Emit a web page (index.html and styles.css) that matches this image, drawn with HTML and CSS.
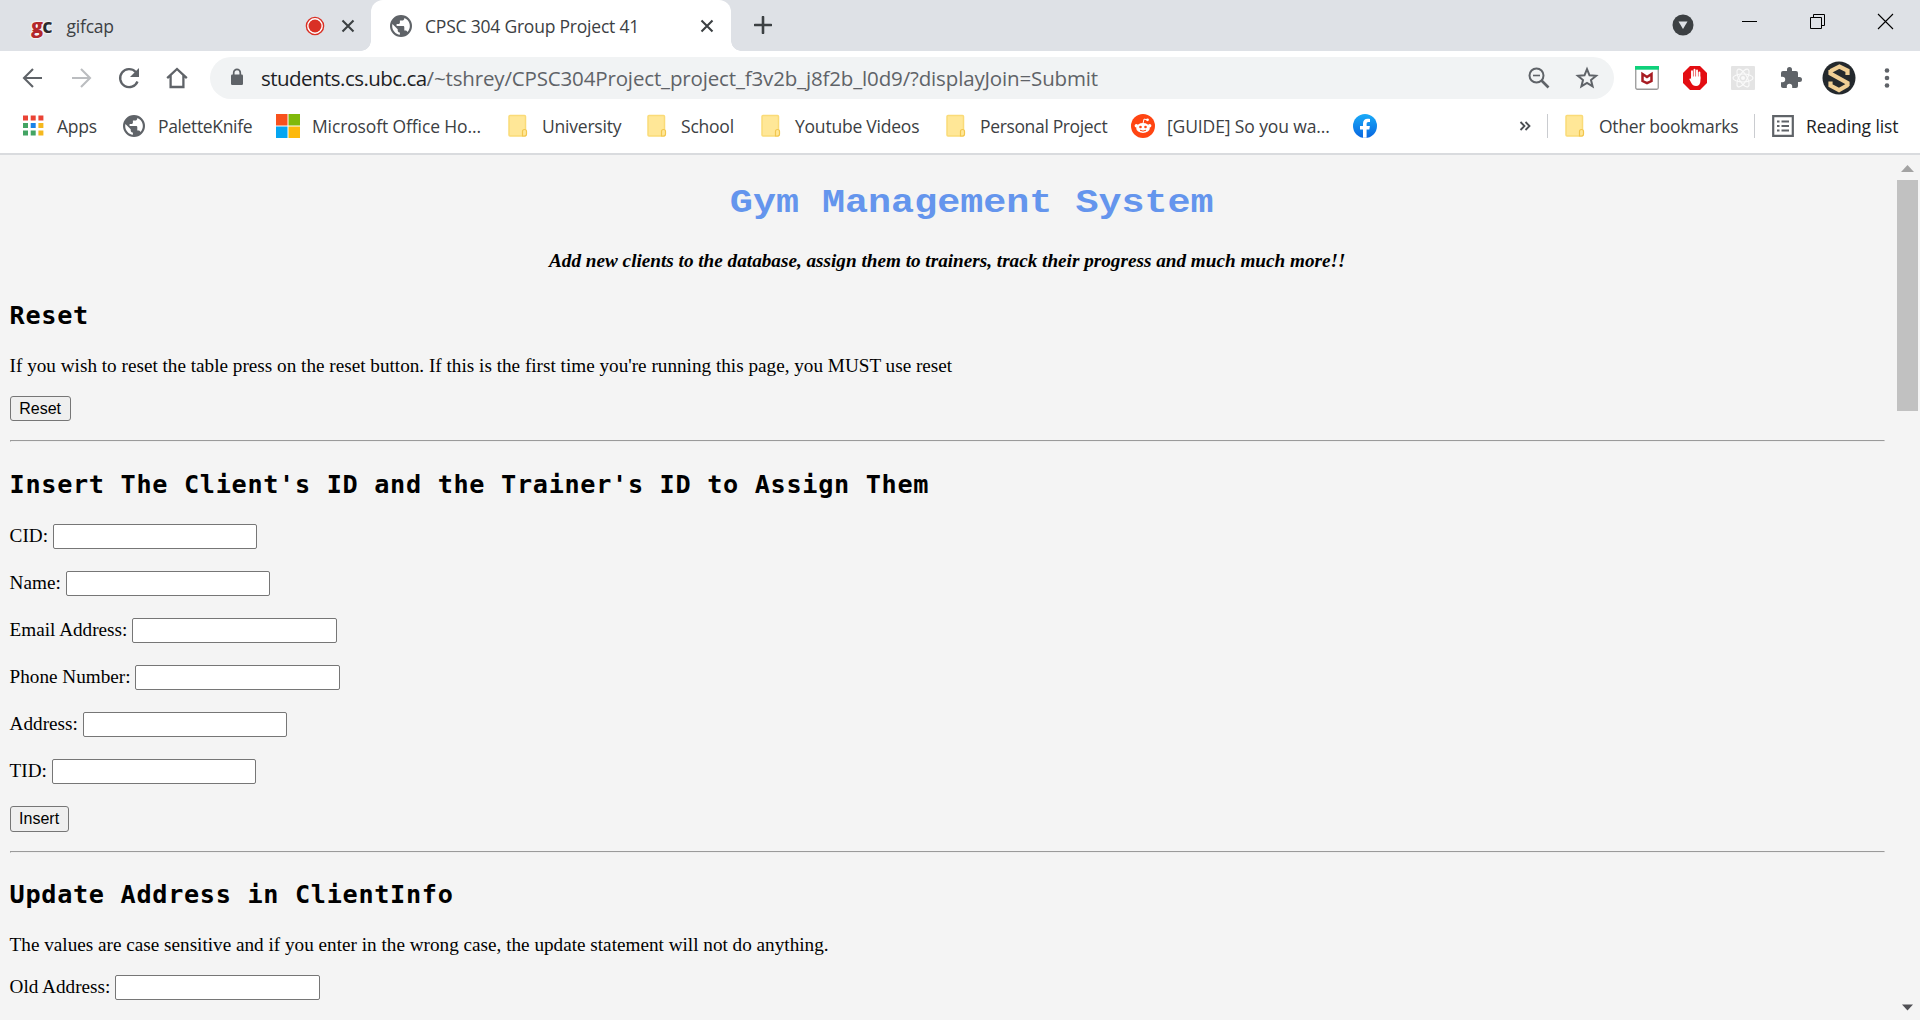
FILE: index.html
```html
<!DOCTYPE html>
<html lang="en">
<head>
<meta charset="utf-8">
<title>CPSC 304 Group Project 41</title>
<link rel="stylesheet" href="styles.css">
</head>
<body>
<svg class="defs" width="0" height="0">
  <symbol id="globe" viewBox="0 0 24 24"><path fill="#5f6368" d="M12 1a11 11 0 1 0 0 22 11 11 0 0 0 0-22zM10.900 20.800C6.500 20.200 3.200 16.500 3.200 12c0-.7.1-1.300.2-2l5.300 5.300v1.100c0 1.200 1 2.200 2.200 2.200v2.200zm7.600-2.800c-.3-.9-1.100-1.500-2.100-1.500h-1.100v-3.300c0-.6-.5-1.100-1.100-1.100H7.600V9.900h2.200c.6 0 1.100-.5 1.100-1.100V6.600h2.200c1.200 0 2.200-1 2.200-2.200v-.5A8.800 8.800 0 0 1 18.500 18z"/></symbol>
  <symbol id="folder" viewBox="0 0 20 24"><rect x="1" y="1.500" width="16.500" height="20.500" rx="1" fill="#ffe797" stroke="#fadb78" stroke-width="1.500"/><path d="M14.500 22v-4.500a2 2 0 0 1 4 0V20a2 2 0 0 1-2 2z" fill="#ffe797" stroke="#f2c64e" stroke-width="1.200"/></symbol>
  <symbol id="cross" viewBox="0 0 14 14"><path d="M1.500 1.500l11 11M12.500 1.500l-11 11" stroke="#3c4043" stroke-width="2.100" fill="none"/></symbol>
</svg>

<header class="tabstrip">
  <div class="tab">
    <span class="gc"><b>g</b><i>c</i></span>
    <span class="tab-title t-gif">gifcap</span>
    <svg class="rec" width="20" height="20" viewBox="0 0 20 20"><circle cx="10" cy="10" r="8.600" fill="#fff" stroke="#d93025" stroke-width="1.400"/><circle cx="10" cy="10" r="6.500" fill="#d93025"/></svg>
    <svg class="x" width="14" height="14"><use href="#cross"/></svg>
  </div>
  <div class="tab active">
    <svg width="24" height="24"><use href="#globe"/></svg>
    <span class="tab-title t-cpsc">CPSC 304 Group Project 41</span>
    <svg class="x" width="14" height="14"><use href="#cross"/></svg>
  </div>
  <svg class="plus" width="18" height="18" viewBox="0 0 18 18"><path d="M9 1v16M1 9h16" stroke="#3c4043" stroke-width="2.600" stroke-linecap="round"/></svg>
  <div class="window-controls">
    <svg class="down" width="22" height="22" viewBox="0 0 22 22"><circle cx="11" cy="11" r="10.500" fill="#3c4043"/><path d="M6.500 7.500h9L11 15z" fill="#dee1e6"/></svg>
    <svg class="wc" width="17" height="17" viewBox="0 0 17 17"><path d="M1 8.500h15" stroke="#000"/></svg>
    <svg class="wc" width="17" height="17" viewBox="0 0 17 17"><path d="M1.500 4.500h11v11h-11zM4.500 4.500v-3h11v11h-3" fill="none" stroke="#000"/></svg>
    <svg class="wc" width="17" height="17" viewBox="0 0 17 17"><path d="M1 1l15 15M16 1L1 16" stroke="#000" stroke-width="1.100"/></svg>
  </div>
</header>

<nav class="toolbar">
  <span class="tool"><svg width="24" height="24" viewBox="0 0 24 24"><path d="M21 12H4M12 3l-9 9 9 9" fill="none" stroke="#5f6368" stroke-width="2.100"/></svg></span>
  <span class="tool"><svg width="24" height="24" viewBox="0 0 24 24"><path d="M3 12h17M12 3l9 9-9 9" fill="none" stroke="#bbbdc0" stroke-width="2.100"/></svg></span>
  <span class="tool"><svg width="24" height="24" viewBox="0 0 24 24"><path d="M20.500 15.500A9 9 0 1 1 18.700 6" fill="none" stroke="#5f6368" stroke-width="2.300"/><path d="M22 2v9h-9z" fill="#5f6368"/></svg></span>
  <span class="tool"><svg width="24" height="24" viewBox="0 0 24 24"><path d="M2.200 12.200L12 3l9.800 9.200M5.600 9.500V21h12.800V9.500" fill="none" stroke="#5f6368" stroke-width="2.300"/></svg></span>
  <div class="omnibox">
    <svg class="lock" width="14" height="18" viewBox="0 0 14 18"><rect x="1" y="6.500" width="12" height="10.500" rx="1.200" fill="#5f6368"/><path d="M3.700 7V4.700a3.300 3.300 0 0 1 6.600 0V7" fill="none" stroke="#5f6368" stroke-width="1.700"/></svg>
    <span class="url"><span class="host">students.cs.ubc.ca</span><span class="path">/~tshrey/CPSC304Project_project_f3v2b_j8f2b_l0d9/?displayJoin=Submit</span></span>
    <span class="tool"><svg width="24" height="24" viewBox="0 0 24 24"><circle cx="9.500" cy="9.500" r="7" fill="none" stroke="#5f6368" stroke-width="2"/><path d="M14.500 14.500l7 7" stroke="#5f6368" stroke-width="2.700"/><path d="M6 9.500h7" stroke="#5f6368" stroke-width="1.600"/></svg></span>
    <span class="tool"><svg width="24" height="24" viewBox="0 0 24 24"><path d="M12 3.200l2.500 6.100 6.600.5-5.100 4.200 1.600 6.400L12 16.900l-5.600 3.500L8 14 2.900 9.800l6.600-.5z" fill="none" stroke="#5f6368" stroke-width="2"/></svg></span>
  </div>
  <span class="tool"><svg width="24" height="24" viewBox="0 0 24 24"><rect x=".75" y=".75" width="22.500" height="22.500" rx="1.500" fill="#fff" stroke="#999" stroke-width="1.300"/><path d="M0 0h24v3.700H0z" fill="#0fd17b"/><path d="M7.500 8l4.500 3 4.500-3v7L12 17.200 7.500 15z" fill="none" stroke="#a81c22" stroke-width="2.500"/></svg></span>
  <span class="tool"><svg width="24" height="24" viewBox="0 0 24 24"><path d="M7 0h10l7 7v10l-7 7H7l-7-7V7z" fill="#e30d12"/><path d="M9 13V5.300M11.500 12V3.800M14 12V4.400M16.400 13V6.500" stroke="#fff" stroke-width="1.900" stroke-linecap="round"/><path d="M8 10.500h9.400V15c0 3-1.700 5-4.300 5-2.500 0-3.700-1-4.900-3.200l-2-3.700c.9-1 1.900-.6 2.800.8z" fill="#fff"/></svg></span>
  <span class="tool"><svg width="24" height="24" viewBox="0 0 24 24"><rect width="24" height="24" rx="1" fill="#e4e4e4"/><g fill="none" stroke="#fafafa" stroke-width="1.100"><ellipse cx="12" cy="12" rx="10" ry="4"/><ellipse cx="12" cy="12" rx="10" ry="4" transform="rotate(60 12 12)"/><ellipse cx="12" cy="12" rx="10" ry="4" transform="rotate(120 12 12)"/></g><circle cx="12" cy="12" r="2" fill="#fafafa"/></svg></span>
  <span class="tool"><svg width="24" height="24" viewBox="0 0 24 24"><path d="M20.500 11H19V7a2 2 0 0 0-2-2h-4V3.500a2.500 2.500 0 0 0-5 0V5H4a2 2 0 0 0-2 2v3.800h1.500a2.700 2.700 0 0 1 0 5.400H2V20c0 1.100.9 2 2 2h3.800v-1.500a2.700 2.700 0 0 1 5.400 0V22H17a2 2 0 0 0 2-2v-4h1.500a2.500 2.500 0 0 0 0-5z" fill="#5f6368"/></svg></span>
  <span class="tool"><svg width="34" height="34" viewBox="0 0 34 34"><circle cx="17" cy="17" r="16.500" fill="#24292d"/><g fill="none" stroke="#f0cf95" stroke-width="4.200"><path d="M25.500 14V9.500L17.500 5.500 8.500 10.200"/><path d="M8.500 9v3.500l17 9.500v3"/><path d="M8.500 20.500v4l8.500 4.500 9-5"/></g></svg></span>
  <span class="tool"><svg width="24" height="24" viewBox="0 0 24 24"><g fill="#5f6368"><circle cx="12" cy="4.500" r="2.300"/><circle cx="12" cy="12" r="2.300"/><circle cx="12" cy="19.500" r="2.300"/></g></svg></span>
</nav>

<nav class="bookmarks">
  <a class="bm apps"><svg width="24" height="24" viewBox="0 0 24 24"><path d="M0 1.500h5v5H0zM7.700 1.500h5v5h-5zM15.400 1.500h5v5h-5z" fill="#ea4335"/><path d="M0 9h5v5H0zM0 16.500h5v5H0zM7.700 16.500h5v5h-5z" fill="#43a463"/><path d="M7.700 9h5v5h-5z" fill="#1a82e8"/><path d="M15.400 9h5v5h-5zM15.400 16.500h5v5h-5z" fill="#f5b81e"/></svg><span>Apps</span></a>
  <a class="bm tight"><svg class="nudge" width="24" height="24"><use href="#globe"/></svg><span>PaletteKnife</span></a>
  <a class="bm site"><svg width="24" height="24" viewBox="0 0 24 24"><path d="M0 0h11.500v11.500H0z" fill="#f8511d"/><path d="M12.500 0H24v11.500H12.500z" fill="#80b90b"/><path d="M0 12.500h11.500V24H0z" fill="#05a5f0"/><path d="M12.500 12.500H24V24H12.500z" fill="#fdb90c"/></svg><span>Microsoft Office Ho...</span></a>
  <a class="bm"><svg width="20" height="24"><use href="#folder"/></svg><span>University</span></a>
  <a class="bm"><svg width="20" height="24"><use href="#folder"/></svg><span>School</span></a>
  <a class="bm"><svg width="20" height="24"><use href="#folder"/></svg><span>Youtube Videos</span></a>
  <a class="bm tight"><svg width="20" height="24"><use href="#folder"/></svg><span>Personal Project</span></a>
  <a class="bm site"><svg width="24" height="24" viewBox="0 0 24 24"><circle cx="12" cy="12" r="12" fill="#ff4512"/><g fill="#fff"><ellipse cx="12" cy="14" rx="6.800" ry="5"/><circle cx="5.300" cy="11.800" r="1.700"/><circle cx="18.700" cy="11.800" r="1.700"/><circle cx="16.500" cy="5.800" r="1.400"/></g><path d="M12 9.500l1-4.400 3.300.7" fill="none" stroke="#fff"/><circle cx="9.500" cy="13" r="1.300" fill="#ff4512"/><circle cx="14.500" cy="13" r="1.300" fill="#ff4512"/><path d="M9 16.200q3 1.800 6 0" fill="none" stroke="#ff4512"/></svg><span>[GUIDE] So you wa...</span></a>
  <a class="bm"><svg width="24" height="24" viewBox="0 0 24 24"><defs><linearGradient id="fb" x2="0" y2="1"><stop stop-color="#1aabf8"/><stop offset="1" stop-color="#0866e0"/></linearGradient></defs><circle cx="12" cy="12" r="12" fill="url(#fb)"/><path d="M10 23.800v-8.300H7v-3.400h3V9.500c0-3 1.800-4.700 4.500-4.700 1.300 0 2.500.2 2.500.2v3h-1.500c-1.500 0-1.900.9-1.900 1.800v2.300h3.300l-.6 3.400h-2.700v8.300z" fill="#fff"/></svg></a>
  <svg class="more" width="12" height="12" viewBox="0 0 12 12"><path d="M1.500 2l4 4-4 4M6.500 2l4 4-4 4" fill="none" stroke="#4b4e52" stroke-width="1.800"/></svg>
  <a class="bm other"><svg width="20" height="24"><use href="#folder"/></svg><span>Other bookmarks</span></a>
  <a class="bm reading"><svg width="22" height="22" viewBox="0 0 22 22"><path d="M1.200 1.200h19.600v19.600H1.200z" fill="none" stroke="#5f6368" stroke-width="2.200"/><path d="M5 6.500h2.500M5 11h2.500M5 15.500h2.500M9.500 6.500H17M9.500 11H17M9.500 15.500H17" stroke="#5f6368" stroke-width="2"/></svg><span>Reading list</span></a>
</nav>

<div class="viewport">
  <main class="page">
    <h1><span>Gym Management System</span></h1>
    <p class="tagline">Add new clients to the database, assign them to trainers, track their progress and much much more!!</p>

    <h2>Reset</h2>
    <p>If you wish to reset the table press on the reset button. If this is the first time you're running this page, you MUST use reset</p>
    <button class="btn reset">Reset</button>
    <hr>

    <h2>Insert The Client's ID and the Trainer's ID to Assign Them</h2>
    <form class="fields">
      <label>CID: <input type="text"></label>
      <label>Name: <input type="text"></label>
      <label>Email Address: <input type="text"></label>
      <label>Phone Number: <input type="text"></label>
      <label>Address: <input type="text"></label>
      <label>TID: <input type="text"></label>
      <button class="btn insert" type="button">Insert</button>
    </form>
    <hr>

    <h2>Update Address in ClientInfo</h2>
    <p>The values are case sensitive and if you enter in the wrong case, the update statement will not do anything.</p>
    <form class="fields">
      <label>Old Address: <input type="text"></label>
    </form>
  </main>
  <div class="scrollbar">
    <svg width="13" height="7" viewBox="0 0 13 7"><path d="M6.500 0L13 7H0z" fill="#a3a3a3"/></svg>
    <div class="thumb"></div>
    <svg class="end" width="13" height="7" viewBox="0 0 13 7"><path d="M1 .5h11L6.500 6.500z" fill="#505055"/></svg>
  </div>
</div>
</body>
</html>
```

FILE: styles.css
```css
* { box-sizing: border-box; }

body {
  margin: 0;
  width: 1920px;
  height: 1020px;
  overflow: hidden;
  display: flex;
  flex-direction: column;
  background: #fff;
  font-family: "Open Sans", "Noto Sans", sans-serif;
  color: #3c4043;
}

.defs { position: absolute; }
svg { display: block; flex: none; }

/* Tab strip */
.tabstrip {
  display: flex;
  height: 51px;
  background: #dee1e6;
}

.tab {
  display: flex;
  align-items: center;
  width: 371px;
  padding: 0 16px 0 31px;
}

.tab.active {
  position: relative;
  width: 360px;
  padding: 0 17px 0 18px;
  background: #fff;
  border-radius: 12px 12px 0 0;
}

.tab.active::before,
.tab.active::after {
  content: "";
  position: absolute;
  bottom: 0;
  width: 10px;
  height: 10px;
}

.tab.active::before {
  left: -10px;
  background: radial-gradient(circle at 0 0, transparent 9.5px, #fff 10px);
}

.tab.active::after {
  right: -10px;
  background: radial-gradient(circle at 100% 0, transparent 9.5px, #fff 10px);
}

.tab-title {
  font-size: 17.5px;
  line-height: 24px;
  letter-spacing: -0.21px;
  white-space: nowrap;
}

.tab .x { margin-left: auto; }
.rec { margin-left: 191px; }

.gc {
  display: flex;
  width: 35.5px;
  font-size: 20px;
  font-weight: 700;
  line-height: 22px;
  letter-spacing: -1px;
  text-shadow: 0 0 2px #fff, 0 0 2px #fff, 0 0 2px #fff;
}
.gc b { color: #b3282b; }
.gc i { color: #2b2b2e; font-style: normal; }

.t-cpsc { margin-left: 12px; }

.plus { margin: 16px 0 0 23px; }

.window-controls {
  display: flex;
  align-items: flex-start;
  margin-left: auto;
}

.down { margin: 14px 22px 0 0; }
.wc { margin: 13px 26px 0 25px; }

/* Address bar */
.toolbar {
  display: flex;
  align-items: center;
  height: 54px;
  padding: 0 9px;
}

.tool {
  display: flex;
  flex: none;
  align-items: center;
  justify-content: center;
  width: 48px;
  height: 42px;
}

.omnibox {
  display: flex;
  align-items: center;
  width: 1404px;
  height: 42px;
  margin: 0 9px;
  padding: 0 3px 0 20px;
  border-radius: 21px;
  background: #f1f3f4;
}

.lock { margin-bottom: 2px; }

.url {
  flex: 1;
  margin-left: 17px;
  font-size: 20.5px;
  line-height: 28px;
  white-space: nowrap;
}

.host { color: #202124; letter-spacing: -0.54px; }
.path { color: #5f6368; letter-spacing: -0.15px; }

/* Bookmarks bar */
.bookmarks {
  display: grid;
  grid-template-columns: 100px 153px 232px 139px 114px 185px 185px 222px 166px 28px 207px 167px;
  align-items: center;
  height: 50px;
  padding: 0 0 7px 23px;
  border-bottom: 2px solid #d9dbde;
  font-size: 17.5px;
  letter-spacing: -0.22px;
}

.bm {
  display: flex;
  align-items: center;
  gap: 11px;
  line-height: 24px;
  white-space: nowrap;
}

.bm svg[width="20"] { margin-right: 3px; }
.bm .nudge { margin: 0 1px 0 -1px; }
.bm.apps { gap: 10px; }
.bm.tight { letter-spacing: -0.35px; }
.bm.site { gap: 12px; letter-spacing: -0.12px; }

.bm.other,
.bm.reading {
  height: 24px;
  padding-left: 17px;
  border-left: 1px solid #caccd0;
}
.bm.other { letter-spacing: -0.3px; }
.bm.reading { gap: 12px; color: #202124; letter-spacing: -0.1px; }

/* Page shown in the browser */
.viewport {
  display: flex;
  flex: 1;
  min-height: 0;
  background: #f4f4f4;
}

.page {
  width: 1894.5px;
  padding: 25px 9.6px 0;
  color: #000;
  font: 19.2px/22px "Liberation Serif", "Times New Roman", serif;
  overflow: hidden;
}

h1, h2, p { margin: 0; }

h1 {
  padding-left: 49px;
  color: #6495ed;
  font: 700 38.4px/44px "Liberation Mono", "Courier New", monospace;
  text-align: center;
}

/* Flattens the capitals to the low, wide proportions of Courier */
h1 span {
  display: inline-block;
  transform: scaleY(0.87);
  transform-origin: 0 34px;
}

h2 {
  margin: 26px 0 22px;
  font: 700 25.2px/34px "DejaVu Sans Mono", Consolas, monospace;
  letter-spacing: 0.69px;
  white-space: nowrap;
}

.tagline {
  margin: 26px 0;
  font-size: 19.2px;
  font-weight: 700;
  font-style: italic;
  text-align: center;
}

.tagline + h2 { margin-top: 27px; }

.btn {
  display: block;
  height: 25px;
  padding: 0;
  border: 1px solid #767676;
  border-radius: 3px;
  background: #efefef;
  color: #000;
  font: 16px/20px "Liberation Sans", Arial, sans-serif;
}

.reset { width: 61px; margin-top: 19px; }
.insert { width: 59px; height: 26px; }

hr {
  height: 2px;
  margin: 19px 0 0;
  border: 1px solid #9a9a9a;
  border-bottom-color: #eee;
  border-right-color: #eee;
}

.fields {
  display: flex;
  flex-direction: column;
  gap: 22px;
}

.fields label {
  display: flex;
  gap: 4.8px;
  height: 25px;
  line-height: 24px;
}

.fields input {
  width: 204.5px;
  height: 25px;
  padding: 1px 2px;
  border: 1px solid #767676;
  border-radius: 2px;
  background: #fff;
}

.fields + hr + h2 { margin-top: 25px; }
p + .fields { margin-top: 19px; }

.scrollbar {
  display: flex;
  flex-direction: column;
  align-items: center;
  flex: 1;
  padding: 10px 0 9px;
}

.thumb {
  width: 21px;
  height: 231px;
  margin-top: 8px;
  background: #c1c1c1;
}

.scrollbar .end { margin-top: auto; }
```
